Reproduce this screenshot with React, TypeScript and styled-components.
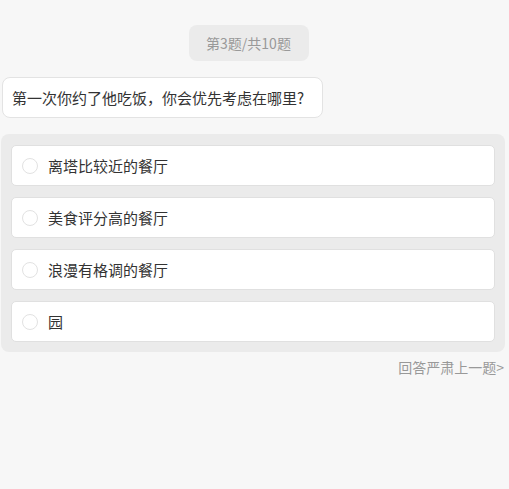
import React from "react";
import styled, { createGlobalStyle } from "styled-components";

const Global = createGlobalStyle`
  html, body { margin: 0; padding: 0; background: #f7f7f7; }
  body { font-family: "Microsoft YaHei", "Noto Sans CJK SC", "Noto Sans", sans-serif; }
`;

const Page = styled.div`
  width: 509px;
  min-height: 489px;
  box-sizing: border-box;
  padding: 25px 4px 0 1px;
  display: flex;
  flex-direction: column;
`;

const BadgeRow = styled.div`
  display: flex;
  justify-content: center;
  padding-right: 9px;
`;

const Badge = styled.div`
  width: 120px;
  height: 36px;
  border-radius: 8px;
  background: #ebebeb;
  color: #999;
  font-size: 14px;
  display: flex;
  align-items: center;
  justify-content: center;
`;

const Question = styled.div`
  align-self: flex-start;
  margin: 16px 0 0 1px;
  height: 41px;
  box-sizing: border-box;
  padding: 0 18px 0 9px;
  background: #fff;
  border: 1px solid #e3e3e3;
  border-radius: 8px;
  color: #333;
  font-size: 15px;
  display: flex;
  align-items: center;
`;

const Panel = styled.div`
  margin-top: 16px;
  background: #ebebeb;
  border-radius: 8px;
  padding: 11px 10px 10px 10px;
  display: flex;
  flex-direction: column;
  gap: 11px;
`;

const Option = styled.div`
  height: 41px;
  box-sizing: border-box;
  background: #fff;
  border: 1px solid #e0e0e0;
  border-radius: 5px;
  padding-left: 10px;
  display: flex;
  align-items: center;
  gap: 10px;
  color: #333;
  font-size: 15px;
`;

const Radio = styled.span`
  width: 16px;
  height: 16px;
  box-sizing: border-box;
  border-radius: 50%;
  border: 1px solid #e2e2e2;
  flex: none;
`;

const Footer = styled.div`
  margin-top: 5px;
  align-self: flex-end;
  color: #999;
  font-size: 14px;
  margin-right: 1px;
`;

const options = ["离塔比较近的餐厅", "美食评分高的餐厅", "浪漫有格调的餐厅", "园"];

export default function App() {
  return (
    <>
      <Global />
      <Page>
        <BadgeRow>
          <Badge>第3题/共10题</Badge>
        </BadgeRow>
        <Question>第一次你约了他吃饭，你会优先考虑在哪里?</Question>
        <Panel>
          {options.map((o) => (
            <Option key={o}>
              <Radio />
              {o}
            </Option>
          ))}
        </Panel>
        <Footer>回答严肃上一题&gt;</Footer>
      </Page>
    </>
  );
}
